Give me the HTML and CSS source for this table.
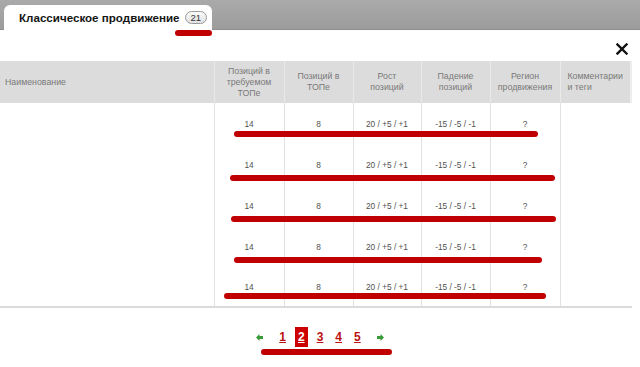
FILE: index.html
```html
<!DOCTYPE html>
<html lang="ru">
<head>
<meta charset="utf-8">
<link rel="stylesheet" href="styles.css">
</head>
<body>
<div class="page">
  <div class="topbar">
    <div class="tab">
      <span class="title">Классическое продвижение</span>
      <span class="badge">21</span>
    </div>
  </div>
  <div class="closerow">
    <svg class="close" width="12" height="12" viewBox="0 0 12 12"><path d="M1.5 1.5 L10.5 10.5 M10.5 1.5 L1.5 10.5" stroke="#111" stroke-width="2.4" stroke-linecap="square"/></svg>
  </div>
  <table class="grid">
    <colgroup>
      <col class="c-name"><col class="c-a"><col class="c-b"><col class="c-c"><col class="c-d"><col class="c-e"><col class="c-f">
    </colgroup>
    <thead>
      <tr>
        <th class="left">Наименование</th>
        <th>Позиций в<br>требуемом<br>ТОПе</th>
        <th>Позиций в<br>ТОПе</th>
        <th>Рост<br>позиций</th>
        <th>Падение<br>позиций</th>
        <th>Регион<br>продвижения</th>
        <th class="left">Комментарии<br>и теги</th>
      </tr>
    </thead>
    <tbody>
      <tr><td></td><td>14</td><td>8</td><td>20 / +5 / +1</td><td>-15 / -5 / -1</td><td>?</td><td></td></tr>
      <tr><td></td><td>14</td><td>8</td><td>20 / +5 / +1</td><td>-15 / -5 / -1</td><td>?</td><td></td></tr>
      <tr><td></td><td>14</td><td>8</td><td>20 / +5 / +1</td><td>-15 / -5 / -1</td><td>?</td><td></td></tr>
      <tr><td></td><td>14</td><td>8</td><td>20 / +5 / +1</td><td>-15 / -5 / -1</td><td>?</td><td></td></tr>
      <tr class="last"><td></td><td>14</td><td>8</td><td>20 / +5 / +1</td><td>-15 / -5 / -1</td><td>?</td><td></td></tr>
    </tbody>
  </table>
  <div class="pager">
    <svg class="arrow" width="7" height="7" viewBox="0 0 7 7"><path d="M0 3.5 L3.5 0 L3.5 2 L7 2 L7 5 L3.5 5 L3.5 7 Z" fill="#3a9a3a"/></svg>
    <a class="pg">1</a>
    <a class="pg active">2</a>
    <a class="pg">3</a>
    <a class="pg">4</a>
    <a class="pg">5</a>
    <svg class="arrow" width="7" height="7" viewBox="0 0 7 7"><path d="M7 3.5 L3.5 0 L3.5 2 L0 2 L0 5 L3.5 5 L3.5 7 Z" fill="#3a9a3a"/></svg>
  </div>
  <div class="mark m-tab"></div>
  <div class="mark m-r1"></div>
  <div class="mark m-r2"></div>
  <div class="mark m-r3"></div>
  <div class="mark m-r4"></div>
  <div class="mark m-r5"></div>
  <div class="mark m-pg"></div>
</div>
</body>
</html>
```

FILE: styles.css
```css
* { box-sizing: border-box; }
html, body { margin: 0; padding: 0; background: #fff; }
body { font-family: "Liberation Sans", Arial, sans-serif; width: 640px; height: 367px; overflow: hidden; }
.page { position: relative; width: 640px; height: 367px; }

.topbar {
  height: 30px;
  background: linear-gradient(#aaaaaa, #9c9c9c);
  border-bottom: 1px solid #8f8f8f;
  padding-left: 4px;
  display: flex;
  align-items: flex-end;
}
.tab {
  width: 208px;
  height: 25px;
  margin-bottom: -1px;
  background: #fff;
  border-radius: 6px 6px 0 0;
  padding-left: 15px;
  display: flex;
  align-items: center;
  gap: 5px;
  white-space: nowrap;
}
.title { font-weight: bold; font-size: 11.6px; color: #151515; white-space: nowrap; }
.badge {
  font-size: 9.5px;
  color: #333;
  border: 1px solid #9a9a9a;
  border-radius: 7px;
  background: linear-gradient(#fafafa, #e2e2e2);
  padding: 0 5px;
  height: 13px;
  line-height: 11px;
}

.closerow {
  height: 31px;
  display: flex;
  justify-content: flex-end;
  align-items: center;
  padding-right: 12px;
  padding-top: 7px;
}

.grid {
  border-collapse: collapse;
  table-layout: fixed;
  width: 632px;
  font-size: 8.5px;
}
.c-name { width: 214px; }
.c-a { width: 70px; }
.c-b { width: 69px; }
.c-c { width: 68px; }
.c-d { width: 69px; }
.c-e { width: 70px; }
.c-f { width: 72px; }
.grid th {
  background: #dcdcdc;
  color: #7a7a7a;
  font-weight: normal;
  font-size: 8.8px;
  line-height: 11px;
  height: 42px;
  padding: 0 2px;
  text-align: center;
  vertical-align: middle;
  border-left: 1px solid #e9e9e9;
}
.grid th:first-child { border-left: none; }
.grid th:last-child { background: linear-gradient(to right, #dcdcdc 70px, #fff 70px); }
.grid th.left { text-align: left; padding-left: 5px; }
.grid th:last-child.left { padding-left: 7px; }
.grid td {
  height: 41px;
  color: #505050;
  font-size: 8.3px;
  text-align: center;
  vertical-align: middle;
  padding: 0;
  border-left: 1px solid #e2e2e2;
}
.grid td:first-child { border-left: none; }
.grid tr.last td { height: 40px; border-bottom: 2px solid #dadada; }

.pager {
  height: 60px;
  display: flex;
  justify-content: center;
  align-items: center;
  padding-bottom: 2px;
}
.arrow { margin: 0 10px; }
.pg {
  font-size: 12px;
  font-weight: bold;
  color: #b11;
  text-decoration: underline;
  padding: 3px 3px;
  margin: 0 3px;
  line-height: 14px;
}
.pg.active { background: #c00; color: #fff; padding: 3px 3px; }

.mark { position: absolute; height: 6px; border-radius: 3px; background: #c00000; }
.m-tab { left: 175px; top: 30px; width: 37px; }
.m-r1 { left: 234px; top: 131px; width: 304px; }
.m-r2 { left: 230px; top: 175px; width: 325px; }
.m-r3 { left: 231px; top: 216px; width: 325px; }
.m-r4 { left: 234px; top: 257px; width: 308px; }
.m-r5 { left: 224px; top: 293px; width: 322px; }
.m-pg { left: 261px; top: 349px; width: 131px; }
```
